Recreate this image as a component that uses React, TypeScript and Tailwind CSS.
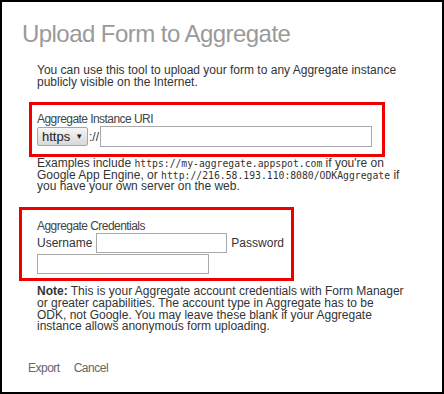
const App = () => {
  return (
    <div className="relative h-[394px] w-[444px] border-2 border-black bg-white font-['Liberation_Sans',Arial,sans-serif] text-[#333]">
      <h1 className="ml-[20px] mt-[18px] text-[24px] leading-[28px] tracking-[-0.55px] text-[#9a9a9a]">
        Upload Form to Aggregate
      </h1>

      <div className="ml-[35px] w-[367px]">
        <p className="mt-[16px] text-[12px] leading-[12px]">
          You can use this tool to upload your form to any Aggregate instance publicly visible on the Internet.
        </p>

        <div className="mt-[25px] text-[12px] leading-[12px] tracking-[-0.55px] text-[#444]">Aggregate Instance URI</div>
        <div className="mt-[1px] flex h-[21px] items-center">
          <div className="flex h-[19px] w-[51px] items-center rounded-[2px] border border-[#a6a6a6] bg-gradient-to-b from-[#f6f6f6] to-[#d8d8d8] pl-[4px] text-[13px] leading-[13px] text-[#222]">
            https
            <span className="ml-[5px] text-[8px] leading-[8px]">▼</span>
          </div>
          <span className="ml-[1px] text-[12px] leading-[12px]">://</span>
          <input className="ml-[1px] h-[21px] w-[272px] border border-[#a9a9a9] bg-white outline-none" />
        </div>

        <p className="mt-[11px] text-[12px] leading-[11.7px]">
          Examples include{' '}
          <code className="font-['DejaVu_Sans_Mono',monospace] text-[9.75px]">https://my-aggregate.appspot.com</code> if
          you're on Google App Engine, or{' '}
          <code className="font-['DejaVu_Sans_Mono',monospace] text-[9.75px]">http://216.58.193.110:8080/ODKAggregate</code>{' '}
          if you have your own server on the web.
        </p>

        <div className="mt-[27px] text-[12px] leading-[12px] tracking-[-0.55px] text-[#444]">Aggregate Credentials</div>
        <div className="mt-[1px] flex items-center text-[12px] leading-[12px]">
          <span>Username</span>
          <input className="ml-[4px] h-[20px] w-[131px] border border-[#a9a9a9] bg-white outline-none" />
          <span className="ml-[4px]">Password</span>
        </div>
        <input className="mt-[1px] block h-[20px] w-[172px] border border-[#a9a9a9] bg-white outline-none" />

        <p className="mt-[12px] text-[12px] leading-[11.7px]">
          <b>Note:</b> This is your Aggregate account credentials with Form Manager or greater capabilities. The account
          type in Aggregate has to be ODK, not Google. You may leave these blank if your Aggregate instance allows
          anonymous form uploading.
        </p>
      </div>

      <div className="ml-[26px] mt-[29px] flex gap-[14px] text-[12px] leading-[12px] tracking-[-0.5px] text-[#666]">
        <span>Export</span>
        <span>Cancel</span>
      </div>

      <div className="absolute left-[27px] top-[100px] h-[55px] w-[356px] border-[3px] border-[#ee0000]" />
      <div className="absolute left-[17px] top-[205px] h-[74px] w-[275px] border-[3px] border-[#ee0000]" />
    </div>
  );
};

export default App;
